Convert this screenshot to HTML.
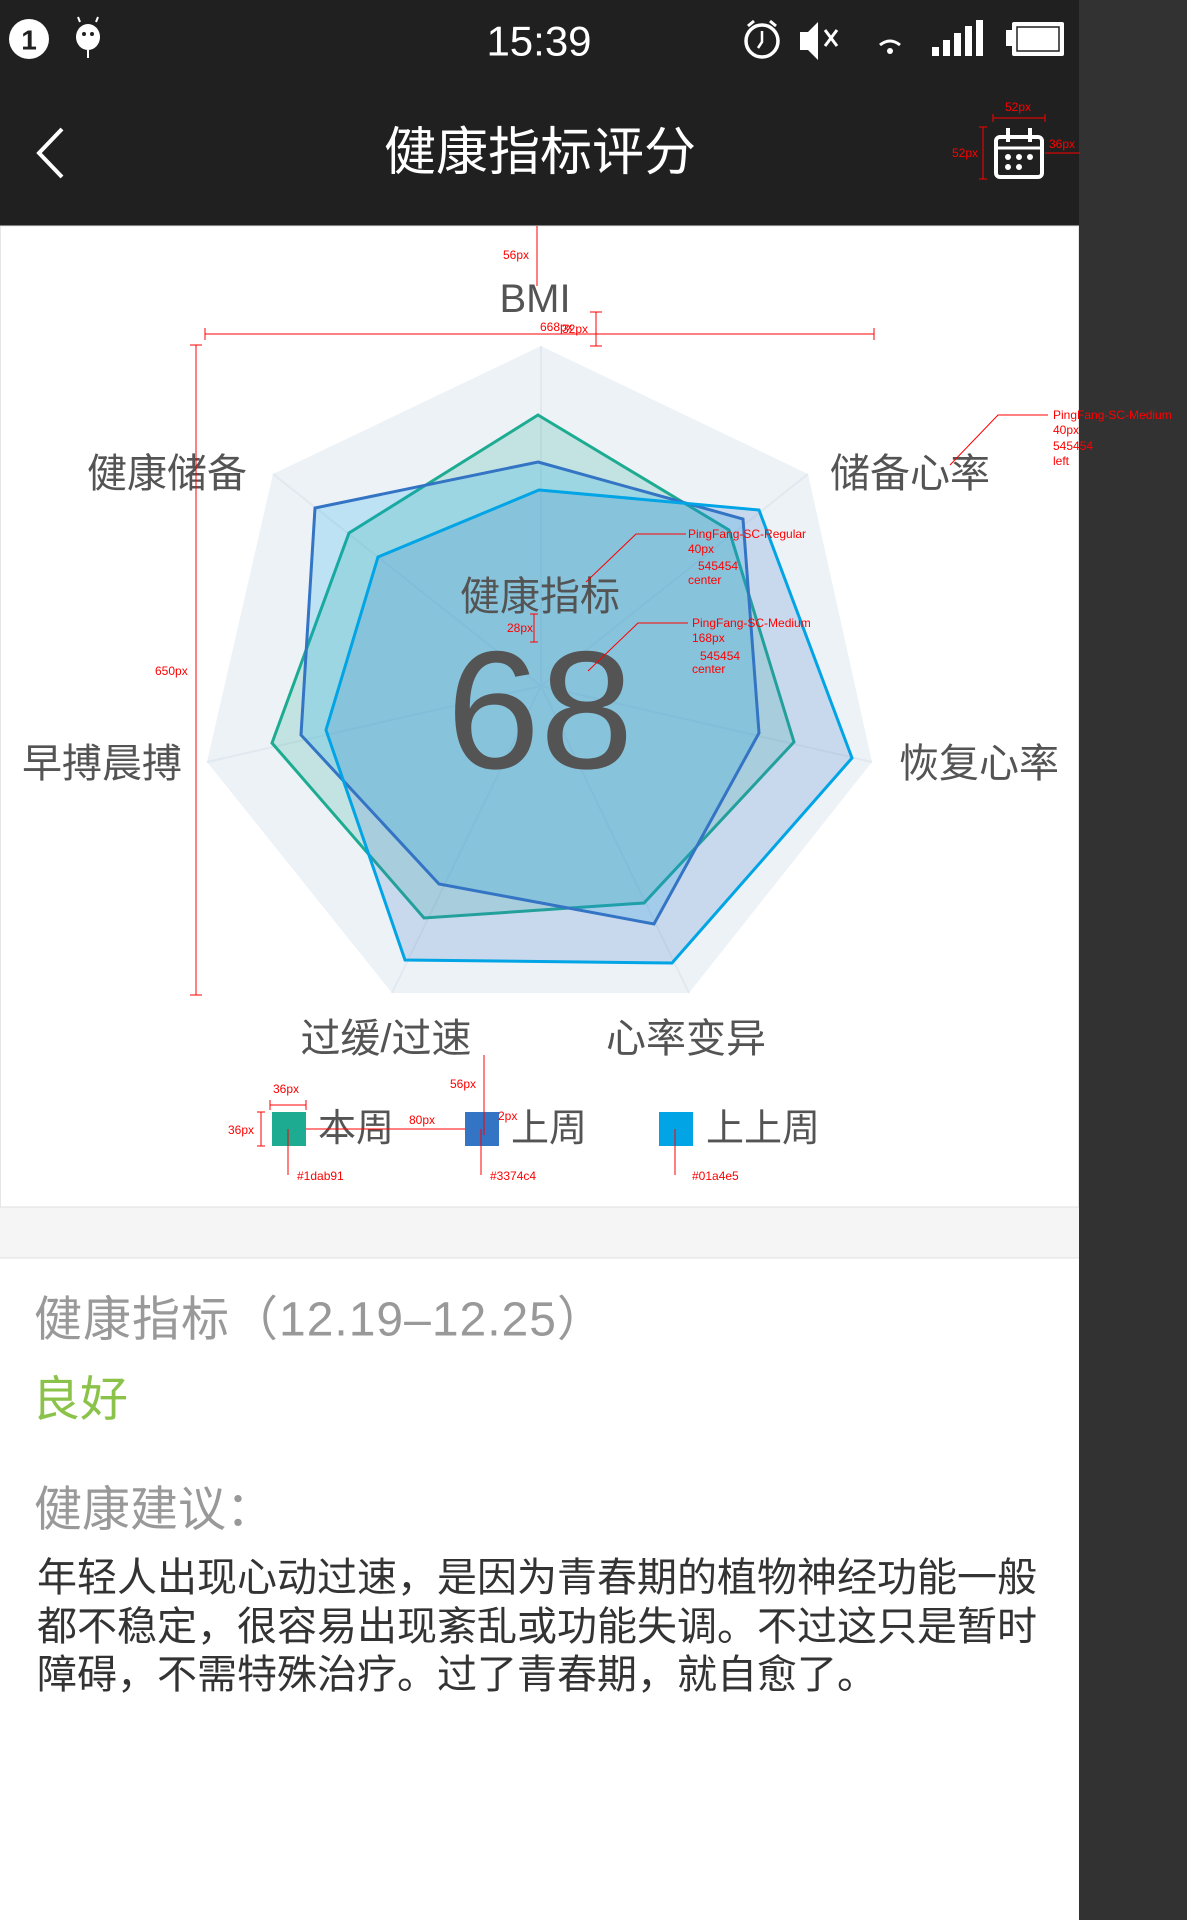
<!DOCTYPE html>
<html><head><meta charset="utf-8"><style>
html,body{margin:0;padding:0;background:#fff;}
svg{display:block;}
text{font-family:"Liberation Sans","Noto Sans CJK SC",sans-serif;}
</style></head><body>
<svg width="1187" height="1920" viewBox="0 0 1187 1920" xmlns="http://www.w3.org/2000/svg">
<rect x="0" y="0" width="1187" height="1920" fill="#fff"/>
<rect x="1079" y="0" width="108" height="1920" fill="#323232"/>
<rect x="0" y="0" width="1079" height="226" fill="#202020"/>
<!-- status bar -->
<circle cx="29" cy="39" r="20" fill="#fff"/>
<text x="29" y="40" font-size="28" font-weight="bold" fill="#202020" text-anchor="middle" dominant-baseline="central">1</text>
<ellipse cx="88" cy="37" rx="12" ry="13" fill="#fff"/>
<line x1="80" y1="22" x2="78" y2="17" stroke="#fff" stroke-width="2"/><line x1="96" y1="22" x2="98" y2="17" stroke="#fff" stroke-width="2"/>
<circle cx="84" cy="34" r="2" fill="#202020"/><circle cx="92" cy="34" r="2" fill="#202020"/>
<line x1="88" y1="50" x2="88" y2="58" stroke="#fff" stroke-width="2"/>
<text x="539" y="41" font-size="42" fill="#fff" text-anchor="middle" dominant-baseline="central">15:39</text>
<circle cx="762" cy="41" r="16" fill="none" stroke="#fff" stroke-width="3.5"/>
<path d="M762 31v11l-4 6" stroke="#fff" stroke-width="2.5" fill="none"/>
<path d="M748 26l6-5M776 26l-6-5" stroke="#fff" stroke-width="3"/>
<path d="M800 32h8l10-10v38l-10-10h-8z" fill="#fff"/>
<path d="M825 30l12 16M837 30l-12 16" stroke="#fff" stroke-width="3"/>
<path d="M880 45q10-8 20 0" stroke="#fff" stroke-width="3" fill="none"/><circle cx="890" cy="51" r="3" fill="#fff"/>
<rect x="932" y="47" width="7" height="9" fill="#fff"/><rect x="943" y="40" width="7" height="16" fill="#fff"/><rect x="954" y="33" width="7" height="23" fill="#fff"/><rect x="965" y="26" width="7" height="30" fill="#fff"/><rect x="976" y="20" width="7" height="36" fill="#fff"/>
<rect x="1006" y="30" width="6" height="16" fill="#fff"/>
<rect x="1012" y="22" width="52" height="34" fill="#fff" rx="2"/>
<rect x="1017" y="27" width="42" height="24" fill="none" stroke="#202020" stroke-width="1.5"/>
<!-- header -->
<path d="M62 129L39 153L62 177" stroke="#fff" stroke-width="4" fill="none"/>
<text x="540" y="153" font-size="52" fill="#fff" text-anchor="middle" dominant-baseline="central">健康指标评分</text>
<rect x="996" y="137" width="46" height="40" rx="4" fill="none" stroke="#fff" stroke-width="4"/>
<line x1="996" y1="148" x2="1042" y2="148" stroke="#fff" stroke-width="3"/>
<path d="M1008 128v14M1030 128v14" stroke="#fff" stroke-width="4"/>
<g fill="#fff"><circle cx="1008" cy="157" r="3"/><circle cx="1019" cy="157" r="3"/><circle cx="1030" cy="157" r="3"/><circle cx="1008" cy="167" r="3"/><circle cx="1019" cy="167" r="3"/></g>
<g stroke="red" stroke-width="1" fill="none"><path d="M993 118h52M993 114v8M1045 114v8M983 127v52M979 127h8M979 179h8M1045 153h35"/></g>
<text x="1018" y="111" font-size="12" fill="red" text-anchor="middle">52px</text>
<text x="965" y="157" font-size="12" fill="red" text-anchor="middle">52px</text>
<text x="1062" y="148" font-size="12" fill="red" text-anchor="middle">36px</text>
<!-- card -->
<rect x="0.5" y="226" width="1078" height="981" fill="#fff" stroke="#e6e6e6"/>
<rect x="0" y="1207" width="1079" height="51" fill="#f5f5f5"/>
<line x1="0" y1="1207" x2="1079" y2="1207" stroke="#e0e0e0"/><line x1="0" y1="1258" x2="1079" y2="1258" stroke="#e0e0e0"/>
<!-- radar -->
<polygon points="541,346 808,474 872,762 689,993 392,993 207,762 273,474" fill="#edf2f7"/>
<g stroke="#e2e8ef" stroke-width="2"><path d="M541,686L541,346M541,686L808,474M541,686L872,762M541,686L689,993M541,686L392,993M541,686L207,762M541,686L273,474"/></g>
<polygon points="538,415 729,530 794,742 644,903 424,918 272,743 349,533" fill="rgba(29,171,145,0.2)" stroke="#1dab91" stroke-width="3"/>
<polygon points="538,462 743,519 759,733 654,924 439,884 301,735 315,508" fill="rgba(1,164,229,0.2)" stroke="#3374c4" stroke-width="3"/>
<polygon points="539,490 759,510 852,758 672,963 405,960 326,730 378,557" fill="rgba(60,120,200,0.2)" stroke="#01a4e5" stroke-width="3"/>
<g fill="#545454" font-size="40" text-anchor="middle" dominant-baseline="central">
<text x="535" y="299">BMI</text>
<text x="167" y="474">健康储备</text>
<text x="910" y="474">储备心率</text>
<text x="102" y="764">早搏晨搏</text>
<text x="979" y="764">恢复心率</text>
<text x="386" y="1039">过缓/过速</text>
<text x="686" y="1039">心率变异</text>
<text x="540" y="597">健康指标</text>
<text x="540" y="710" font-size="168">68</text>
</g>
<!-- legend -->
<rect x="272" y="1112" width="34" height="34" fill="#1dab91"/>
<rect x="465" y="1112" width="34" height="34" fill="#3374c4"/>
<rect x="659" y="1112" width="34" height="34" fill="#01a4e5"/>
<g fill="#545454" font-size="38" dominant-baseline="central">
<text x="318" y="1129">本周</text><text x="511" y="1129">上周</text><text x="706" y="1129">上上周</text>
</g>
<!-- annotations -->
<g stroke="red" stroke-width="1" fill="none">
<path d="M537 226v60M205 334h669M205 328v12M874 328v12M596 312v34M590 312h12M590 346h12M196 345v650M190 345h12M190 995h12M534 614v28M530 614h8M530 642h8"/>
<path d="M306 1129h159M484 1055v80M270 1105h36M270 1100v10M306 1100v10M261 1112v34M257 1112h8M257 1146h8M288 1129v46M481 1129v46M675 1129v46"/>
<path d="M950 465l48-50h50M586 582l50-48h50M588 671l50-48h50"/>
</g>
<g fill="red" font-size="12">
<text x="540" y="331">668px</text><text x="562" y="333">32px</text><text x="503" y="259">56px</text>
<text x="155" y="675">650px</text><text x="507" y="632">28px</text>
<text x="1053" y="419">PingFang-SC-Medium</text><text x="1053" y="434">40px</text><text x="1053" y="450">545454</text><text x="1053" y="465">left</text>
<text x="688" y="538">PingFang-SC-Regular</text><text x="688" y="553">40px</text><text x="698" y="570">545454</text><text x="688" y="584">center</text>
<text x="692" y="627">PingFang-SC-Medium</text><text x="692" y="642">168px</text><text x="700" y="660">545454</text><text x="692" y="673">center</text>
<text x="273" y="1093">36px</text><text x="228" y="1134">36px</text><text x="409" y="1124">80px</text><text x="450" y="1088">56px</text><text x="498" y="1120">2px</text>
<text x="297" y="1180">#1dab91</text><text x="490" y="1180">#3374c4</text><text x="692" y="1180">#01a4e5</text>
</g>
<!-- bottom text -->
<text x="34" y="1320" font-size="48" fill="#999" dominant-baseline="central" letter-spacing="1">健康指标（12.19–12.25）</text>
<text x="32" y="1400" font-size="48" fill="#8bc34a" dominant-baseline="central">良好</text>
<text x="34" y="1510" font-size="48" fill="#999" dominant-baseline="central">健康建议：</text>
<g font-size="40" fill="#333" dominant-baseline="central">
<text x="37" y="1578">年轻人出现心动过速，是因为青春期的植物神经功能一般</text>
<text x="37" y="1627">都不稳定，很容易出现紊乱或功能失调。不过这只是暂时</text>
<text x="37" y="1675">障碍，不需特殊治疗。过了青春期，就自愈了。</text>
</g>
</svg>
</body></html>
